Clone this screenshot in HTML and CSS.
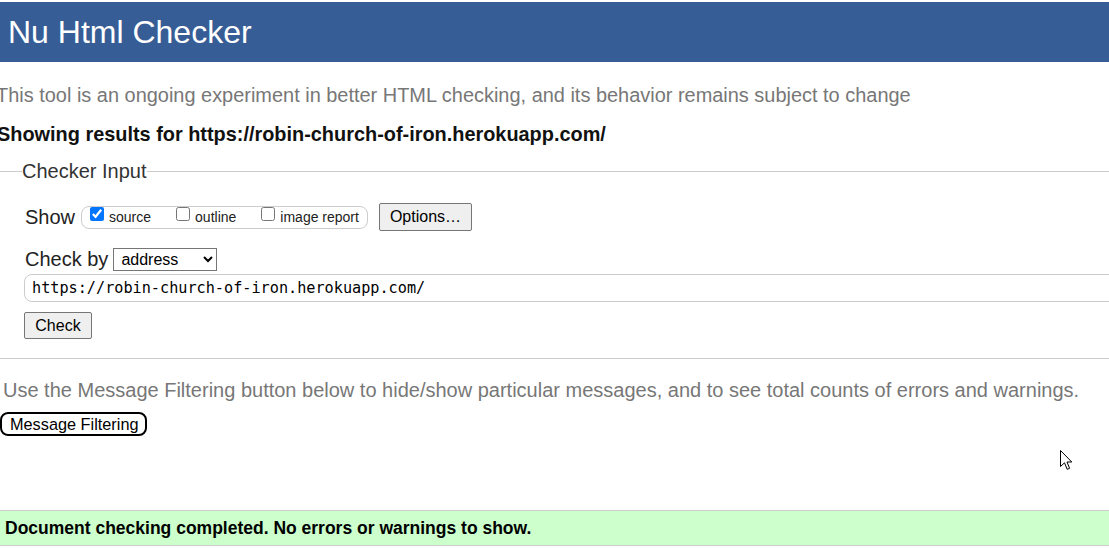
FILE: index.html
```html
<!DOCTYPE html>
<html lang="en">
<head>
<meta charset="utf-8">
<title>Nu Html Checker</title>
<link rel="stylesheet" href="styles.css">
</head>
<body>
<h1 class="header">Nu Html Checker</h1>
<p class="intro">This tool is an ongoing experiment in better HTML checking, and its behavior remains subject to change</p>
<p class="results">Showing results for https://robin-church-of-iron.herokuapp.com/</p>
<fieldset class="checker">
  <legend class="legend">Checker Input</legend>
  <div class="inner">
    <div class="row show-row">
      <span class="big-label">Show</span>
      <span class="group">
        <label class="opt"><input type="checkbox" class="cb" checked><span>source</span></label>
        <label class="opt"><input type="checkbox" class="cb"><span>outline</span></label>
        <label class="opt"><input type="checkbox" class="cb"><span>image report</span></label>
      </span>
      <button class="btn options-btn" type="button">Options…</button>
    </div>
    <div class="row checkby-row">
      <span class="big-label">Check by</span>
      <select class="sel"><option>address</option></select>
    </div>
    <input class="url" type="text" value="https://robin-church-of-iron.herokuapp.com/">
    <button class="btn check-btn" type="button">Check</button>
  </div>
</fieldset>
<p class="filter-note">Use the Message Filtering button below to hide/show particular messages, and to see total counts of errors and warnings.</p>
<button class="filter-btn" type="button">Message Filtering</button>
<div class="spacer"></div>
<div class="success">Document checking completed. No errors or warnings to show.</div>
<svg class="cursor" width="13" height="21" viewBox="0 0 13 21"><path d="M0.5 0.5 L0.5 16.5 L4.5 12.8 L7.2 19.3 L9.6 18.3 L7 12 L11.8 12 Z" fill="#fff" stroke="#000" stroke-width="1"/></svg>
</body>
</html>
```
FILE: styles.css
```css
html, body {
  overflow: hidden;
}
body {
  margin: 0;
  padding-top: 2px;
  font-family: "Liberation Sans", Arial, sans-serif;
  color: #000;
  background: #fff;
  position: relative;
  width: 1109px;
  height: 548px;
}
.header {
  margin: 0;
  height: 60px;
  line-height: 60px;
  padding-left: 8px;
  font-size: 32px;
  font-weight: normal;
  background: #365d95;
  color: #fff;
}
.intro {
  margin: 22px 0 0 -4px;
  font-size: 19.95px;
  line-height: 23px;
  color: #777;
  white-space: nowrap;
}
.results {
  margin: 16px 0 0 -3px;
  font-size: 19.9px;
  line-height: 23px;
  font-weight: bold;
  color: #111;
  white-space: nowrap;
}
.checker {
  margin: 14px 0 0 0;
  padding: 0 0 19px 0;
  border: none;
  border-top: 1px solid #ccc;
  border-bottom: 1px solid #ccc;
  min-width: 0;
}
.legend {
  margin-left: 22px;
  padding: 0;
  font-size: 20px;
  line-height: 23px;
  color: #333;
}
.inner {
  padding: 20px 0 0 25px;
}
.row {
  display: flex;
  align-items: center;
}
.show-row {
  height: 28px;
}
.big-label {
  font-size: 20px;
  line-height: 23px;
  color: #222;
}
.show-row .big-label {
  margin-right: 6px;
}
.group {
  display: flex;
  align-items: center;
  height: 23px;
  box-sizing: border-box;
  border: 1px solid #ccc;
  border-radius: 8px;
  padding: 0 8px 0 8px;
  font-size: 14px;
  color: #222;
}
.opt {
  display: flex;
  align-items: center;
  margin-right: 25px;
}
.opt:last-child {
  margin-right: 0;
}
.cb {
  width: 14px;
  height: 14px;
  margin: 0 5px 6px 0;
}
.btn {
  font-family: "Liberation Sans", Arial, sans-serif;
  font-size: 16px;
  color: #000;
  background: #efefef;
  border: 1px solid #767676;
  border-radius: 2px;
  padding: 0 10px;
  box-sizing: border-box;
}
.options-btn {
  margin-left: 11px;
  height: 28px;
}
.checkby-row {
  margin-top: 17px;
  gap: 5px;
}
.sel {
  width: 104px;
  height: 23px;
  font-family: "Liberation Sans", Arial, sans-serif;
  font-size: 16px;
  color: #000;
  border: 1px solid #767676;
  border-radius: 0;
  background: #fff;
  padding: 0 0 0 3px;
}
.url {
  display: block;
  margin: 3px 0 0 -1px;
  width: 1120px;
  height: 28px;
  box-sizing: border-box;
  border: 1px solid #ccc;
  border-radius: 8px;
  padding: 0 7px;
  font-family: "DejaVu Sans Mono", "Liberation Mono", monospace;
  font-size: 15.2px;
  color: #000;
  outline: none;
}
.check-btn {
  display: block;
  margin: 10px 0 0 -1px;
  width: 68px;
  height: 27px;
}
.filter-note {
  margin: 20px 0 0 3px;
  font-size: 20px;
  line-height: 23px;
  color: #777;
  white-space: nowrap;
}
.filter-btn {
  display: block;
  margin: 10px 0 0 0;
  width: 147px;
  height: 24px;
  box-sizing: border-box;
  padding: 0 6px 0 8px;
  border: 2px solid #000;
  border-radius: 8px;
  background: #fff;
  font-family: "Liberation Sans", Arial, sans-serif;
  font-size: 16.3px;
  color: #000;
  text-align: left;
}
.spacer {
  height: 74px;
}
.success {
  height: 36px;
  box-sizing: border-box;
  border-top: 1px solid #ccc;
  border-bottom: 1px solid #ccc;
  background: #ccffcc;
  padding-left: 5px;
  font-size: 17.5px;
  font-weight: bold;
  line-height: 34px;
  color: #000;
}
.cursor {
  position: absolute;
  left: 1060px;
  top: 450px;
}
```
